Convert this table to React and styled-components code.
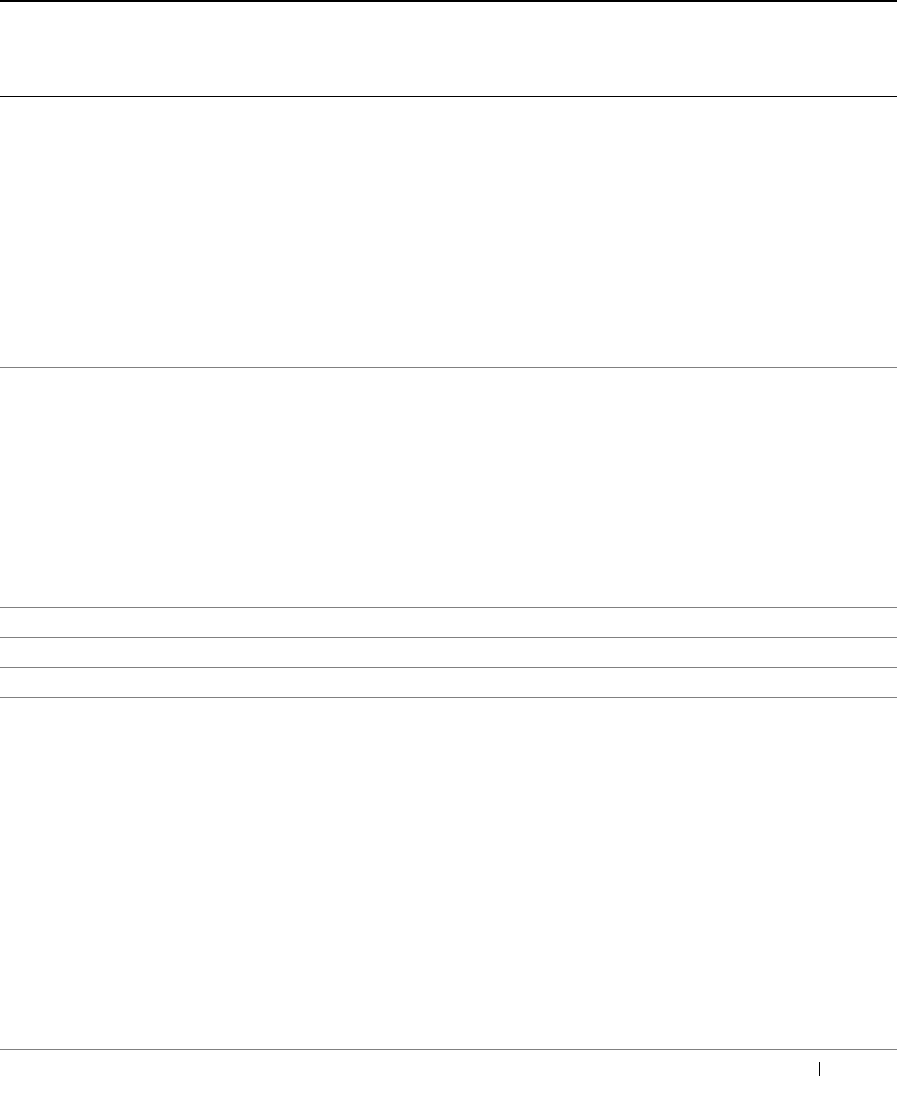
import styled, {createGlobalStyle} from 'styled-components'

const GlobalStyle = createGlobalStyle`
  html, body {
    margin: 0;
    padding: 0;
    background: #ffffff;
    font-family: 'Liberation Sans', Arial, sans-serif;
  }
`

const rows = [1, 2, 3]

export default function App() {
  return (
    <>
      <GlobalStyle />
      <Page>
        <Header />
        <Section height={270} />
        <Section height={239} />
        {rows.map(r => (
          <Row key={r} />
        ))}
        <Section height={351} />
        <Footer>
          <PageMark />
        </Footer>
      </Page>
    </>
  )
}

const Page = styled.div`
  width: 897px;
  display: flex;
  flex-direction: column;
`

const Header = styled.div`
  height: 94px;
  border-top: 2px solid #000000;
  border-bottom: 1px solid #000000;
`

const Section = styled.div`
  height: ${props => props.height}px;
  border-bottom: 1px solid #808080;
`

const Row = styled.div`
  height: 29px;
  border-bottom: 1px solid #808080;
`

const Footer = styled.div`
  display: flex;
  justify-content: flex-end;
  padding-top: 12px;
  padding-right: 77px;
`

const PageMark = styled.span`
  display: block;
  width: 1px;
  height: 14px;
  background: #000000;
`
